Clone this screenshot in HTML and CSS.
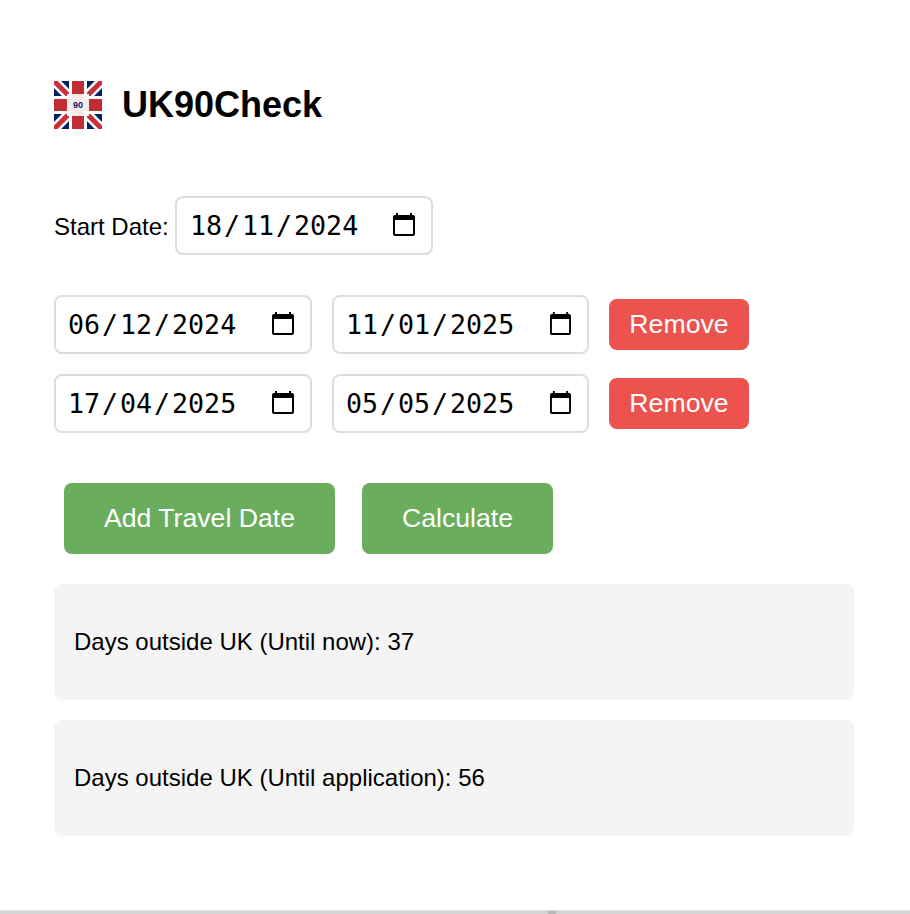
FILE: index.html
```html
<!DOCTYPE html>
<html lang="en">
<head>
<meta charset="utf-8">
<title>UK90Check</title>
<link rel="stylesheet" href="styles.css">
</head>
<body>
<svg class="symbols" aria-hidden="true">
  <symbol id="cal" viewBox="0 0 22 23" preserveAspectRatio="none">
    <path fill-rule="evenodd" d="M3 0h2v2h12V0h2v2h1q2 0 2 2v17q0 2-2 2H2q-2 0-2-2V4q0-2 2-2h1zM2 7v14h18V7z"/>
  </symbol>
</svg>
<main class="app">
  <header class="header">
    <svg class="logo" viewBox="0 0 48 48">
      <rect width="48" height="48" fill="#012169"/>
      <path d="M0 0L48 48M48 0L0 48" stroke="#fff" stroke-width="10"/>
      <path d="M0 0L48 48M48 0L0 48" stroke="#c8313a" stroke-width="5"/>
      <path d="M24 0V48M0 24H48" stroke="#fff" stroke-width="18"/>
      <path d="M24 0V48M0 24H48" stroke="#c02d34" stroke-width="12"/>
      <rect x="13" y="13" width="22" height="22" fill="#fff" fill-opacity=".9"/>
      <text class="logo-text" x="24" y="27" text-anchor="middle">90</text>
    </svg>
    <h1 class="title">UK90Check</h1>
  </header>
  <div class="start">
    <label class="label">Start Date:</label>
    <div class="date"><span>18</span><span>/</span><span>11</span><span>/</span><span>2024</span><svg class="cal"><use href="#cal"/></svg></div>
  </div>
  <div class="trips">
    <div class="trip">
      <div class="date"><span>06</span><span>/</span><span>12</span><span>/</span><span>2024</span><svg class="cal"><use href="#cal"/></svg></div>
      <div class="date"><span>11</span><span>/</span><span>01</span><span>/</span><span>2025</span><svg class="cal"><use href="#cal"/></svg></div>
      <button class="btn remove">Remove</button>
    </div>
    <div class="trip">
      <div class="date"><span>17</span><span>/</span><span>04</span><span>/</span><span>2025</span><svg class="cal"><use href="#cal"/></svg></div>
      <div class="date"><span>05</span><span>/</span><span>05</span><span>/</span><span>2025</span><svg class="cal"><use href="#cal"/></svg></div>
      <button class="btn remove">Remove</button>
    </div>
  </div>
  <div class="actions">
    <button class="btn add">Add Travel Date</button>
    <button class="btn calc">Calculate</button>
  </div>
  <p class="result">Days outside UK (Until now): 37</p>
  <p class="result">Days outside UK (Until application): 56</p>
</main>
<footer class="edge"><div class="edge-mark"></div></footer>
</body>
</html>
```
FILE: styles.css
```css
* { box-sizing: border-box; }
body {
  margin: 0;
  height: 914px;
  display: flex;
  flex-direction: column;
  overflow: hidden;
  background: #fff;
  color: #000;
  font: 24px/28px "Liberation Sans", Arial, sans-serif;
}
.symbols { position: absolute; width: 0; height: 0; }
.app { width: 800px; margin-left: 54px; padding-top: 81px; flex: 1; }
.header { display: flex; align-items: center; gap: 20px; height: 48px; }
.logo { width: 48px; height: 48px; flex: none; }
.logo-text { font: bold 9px "Liberation Sans", Arial, sans-serif; fill: #012169; }
.title { margin: 0; font-size: 36px; line-height: 48px; }
.start { display: flex; align-items: center; height: 59px; margin-top: 67px; }
.label { width: 121px; white-space: nowrap; padding-top: 2px; }
.date {
  display: flex;
  align-items: center;
  width: 258px;
  height: 59px;
  padding: 0 16px 0 10px;
  border: 2px solid #ddd;
  border-radius: 8px;
  font: 26.67px/31px "DejaVu Sans Mono", monospace;
}
.start .date { padding-left: 11px; }
.date span { padding: 0 2px 0 1.9px; }
.date span:nth-child(even) { padding: 0; }
.cal { width: 22px; height: 23px; margin: 0 0 2px auto; }
.trips { display: flex; flex-direction: column; gap: 20px; margin-top: 40px; }
.trip { display: flex; align-items: center; gap: 20px; }
.trip .date:nth-child(2) { width: 257px; }
.trip .date:nth-child(2) .cal { width: 21px; }
.btn {
  padding: 0 0 1px;
  border: 0;
  border-radius: 8px;
  color: #fff;
  font: 26.67px/30px "Liberation Sans", Arial, sans-serif;
}
.remove { width: 140px; height: 51px; background: #ec534e; }
.actions { display: flex; gap: 27px; margin: 50px 0 30px 10px; }
.add, .calc { height: 71px; background: #69ad5d; }
.add { width: 271px; }
.calc { width: 191px; }
.result {
  height: 116px;
  margin: 0 0 20px;
  padding: 44px 20px;
  border-radius: 8px;
  background: #f4f4f4;
}
.edge { height: 4px; background: #d3d5d5; border-top: 1px solid #dce2e2; }
.edge-mark { width: 8px; height: 3px; margin-left: 548px; background: #b9bbbb; }
```
